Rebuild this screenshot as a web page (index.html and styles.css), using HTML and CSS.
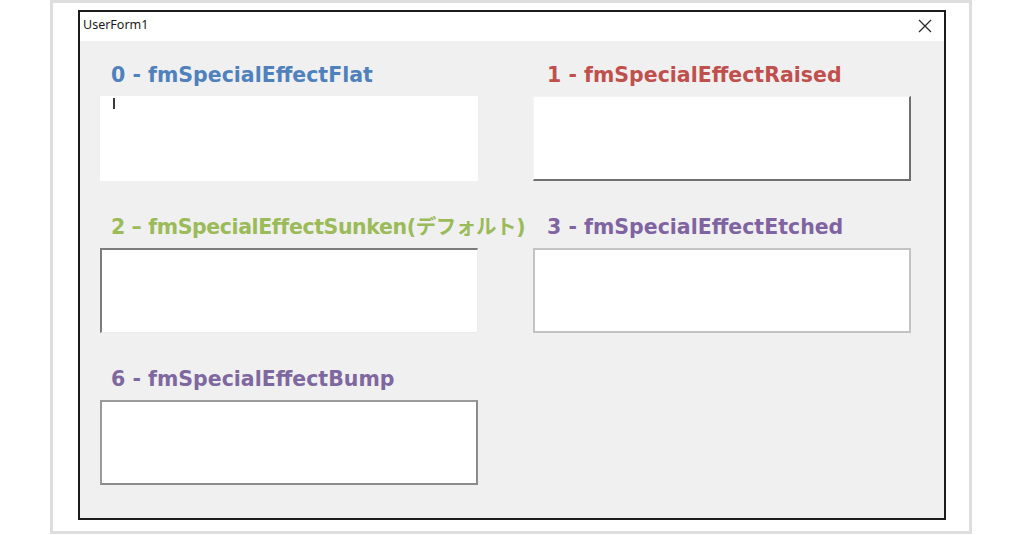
FILE: index.html
```html
<!DOCTYPE html>
<html lang="ja">
<head>
    <meta charset="UTF-8">
    <meta name="viewport" content="width=device-width, initial-scale=1.0">
    <title>UserForm1</title>
    <link rel="stylesheet" href="styles.css">
</head>
<body>
    <div class="frame">
        <div class="window">
            <div class="titlebar">
                <span class="title">UserForm1</span>
                <svg class="close" width="14" height="14" viewBox="0 0 14 14">
                    <path d="M1 1 L13 13 M13 1 L1 13" stroke="#2b2b2b" stroke-width="1.3" fill="none"/>
                </svg>
            </div>
            <div class="form-body">
                <!-- 0 - Flat -->
                <div class="field">
                    <div class="label blue">0 - fmSpecialEffectFlat</div>
                    <div class="box flat"><span class="caret"></span></div>
                </div>
                <!-- 1 - Raised -->
                <div class="field">
                    <div class="label red">1 - fmSpecialEffectRaised</div>
                    <div class="box raised"></div>
                </div>
                <!-- 2 - Sunken -->
                <div class="field">
                    <div class="label green">2 – fmSpecialEffectSunken(デフォルト)</div>
                    <div class="box sunken"></div>
                </div>
                <!-- 3 - Etched -->
                <div class="field">
                    <div class="label purple">3 - fmSpecialEffectEtched</div>
                    <div class="box etched"></div>
                </div>
                <!-- 6 - Bump -->
                <div class="field">
                    <div class="label purple2">6 - fmSpecialEffectBump</div>
                    <div class="box bump"></div>
                </div>
            </div>
        </div>
    </div>
</body>
</html>
```

FILE: styles.css
```css
body {
    margin: 0;
    padding: 0;
    background-color: #fff;
    font-family: "Noto Sans", "Noto Sans CJK JP", sans-serif;
}
.frame {
    width: 868px;
    height: 521px;
    margin-left: 50px;
    border: 3px solid #dedede;
    padding: 7px 23px 0 25px;
}
.window {
    width: 864px;
    height: 506px;
    border: 2px solid #1c1c1c;
    display: flex;
    flex-direction: column;
}
.titlebar {
    height: 29px;
    background-color: #fff;
    display: flex;
    align-items: center;
    justify-content: space-between;
    padding: 0 12px 0 3px;
    flex-shrink: 0;
}
.title {
    font-size: 12.5px;
    color: #1a1a1a;
    margin-top: -4px;
}
.close {
    margin-top: -2px;
}
.form-body {
    flex: 1;
    background-color: #f0f0f0;
    padding: 19px 0 0 20px;
    display: grid;
    grid-template-columns: 378px 378px;
    column-gap: 55px;
    row-gap: 31px;
    align-content: start;
}
.label {
    font-family: "DejaVu Sans", "Noto Sans CJK JP", sans-serif;
    font-weight: 700;
    font-size: 20.5px;
    line-height: 26px;
    height: 26px;
    padding: 2px 0 0 11px;
    margin-bottom: 8px;
    white-space: nowrap;
}
.field:nth-child(even) .label {
    padding-left: 14px;
}
.green {
    letter-spacing: -0.4px;
}
.blue { color: #4f81bd; }
.red { color: #c0504d; }
.green { color: #9bbb59; }
.purple { color: #8064a2; }
.purple2 { color: #7f67a0; }
.box {
    height: 85px;
    background-color: #fff;
    box-sizing: border-box;
    position: relative;
}
.caret {
    position: absolute;
    left: 13px;
    top: 2px;
    width: 2px;
    height: 11px;
    background-color: #3a3a3a;
}
.raised {
    border-style: solid;
    border-width: 1px 2px 2px 1px;
    border-color: #f4f4f4 #6f6f6f #6f6f6f #f4f4f4;
}
.sunken {
    border-style: solid;
    border-width: 2px 1px 1px 2px;
    border-color: #7c7c7c #ececec #ececec #7c7c7c;
}
.etched {
    border: 2px solid #c3c3c3;
}
.bump {
    border-style: solid;
    border-width: 2px;
    border-color: #9a9a9a #8c8c8c #8c8c8c #9a9a9a;
}
```
